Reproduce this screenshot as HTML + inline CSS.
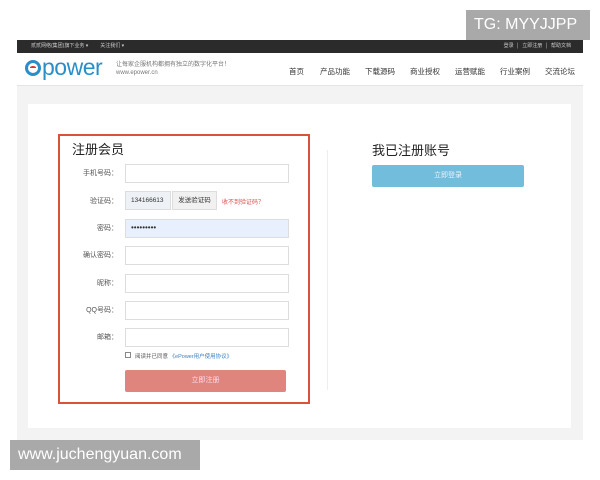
<!DOCTYPE html>
<html><head><meta charset="utf-8"><style>
*{margin:0;padding:0;box-sizing:border-box}
body{width:600px;height:480px;background:#fff;position:relative;overflow:hidden;font-family:"Liberation Sans","Noto Sans CJK SC",sans-serif;color:#333}
.a{position:absolute}
.top{left:17px;top:40px;width:566px;height:13px;background:#2b2b2b;color:#ccc;font-size:5px;line-height:13px}
.hdr{left:17px;top:53px;width:566px;height:33px;background:#fff;border-bottom:1px solid #e4e4e4}
.nav{font-size:7.5px;color:#333;top:66px}
.gray{left:17px;top:86px;width:566px;height:354px;background:#f3f3f3}
.card{left:28px;top:104px;width:543px;height:324px;background:#fff}
.box{left:58px;top:134px;width:252px;height:270px;border:2px solid #d9533a}
.lbl{font-size:7px;color:#555;text-align:right;width:62px;left:56px}
.inp{left:125px;width:164px;height:19px;border:1px solid #ddd;background:#fff}
.wm{background:#a9a9a9;color:#fff;font-size:16px;line-height:30px;padding-left:8px}
</style></head><body>
<div class="a top"><span style="margin-left:14px">贰贰网络(集团)旗下业务 ▾</span><span style="margin-left:12px">关注我们 ▾</span>
<span style="position:absolute;right:12px">登录 &nbsp;│&nbsp; 立即注册 &nbsp;│&nbsp; 帮助文档</span></div>
<div class="a hdr"></div>
<div class="a" style="left:25px;top:60px;width:16px;height:16px;border-radius:50%;border:3px solid #2a8ec9"></div>
<div class="a" style="left:30px;top:66px;width:6px;height:3px;border-top:2px solid #d33;border-radius:50% 50% 0 0"></div>
<div class="a" style="left:42px;top:54px;font-size:23px;color:#2a8ec9;letter-spacing:-0.5px">power</div>
<div class="a" style="left:116px;top:61px;font-size:6px;color:#777;line-height:8px">让每家企服机构都拥有独立的数字化平台！<br>www.epower.cn</div>
<div class="a nav" style="left:289px">首页</div>
<div class="a nav" style="left:320px">产品功能</div>
<div class="a nav" style="left:365px">下载源码</div>
<div class="a nav" style="left:410px">商业授权</div>
<div class="a nav" style="left:455px">运营赋能</div>
<div class="a nav" style="left:500px">行业案例</div>
<div class="a nav" style="left:545px">交流论坛</div>
<div class="a gray"></div>
<div class="a card"></div>
<div class="a box"></div>
<div class="a" style="left:72px;top:139px;font-size:13px;color:#222">注册会员</div>
<div class="a lbl" style="top:168px">手机号码：</div><div class="a inp" style="top:164px"></div>
<div class="a lbl" style="top:196px">验证码：</div>
<div class="a inp" style="top:191px;width:46px;background:#eef2f7;font-size:6.5px;line-height:18px;padding-left:5px">134166613</div>
<div class="a inp" style="top:191px;left:172px;width:45px;background:#f1f1f1;font-size:6.5px;line-height:18px;text-align:center">发送验证码</div>
<div class="a" style="left:222px;top:197px;font-size:6px;color:#d9534f">收不到验证码？</div>
<div class="a lbl" style="top:223px">密码：</div>
<div class="a inp" style="top:219px;background:#e8f0fd;font-size:8px;line-height:16px;padding-left:5px">•••••••••</div>
<div class="a lbl" style="top:250px">确认密码：</div><div class="a inp" style="top:246px"></div>
<div class="a lbl" style="top:278px">昵称：</div><div class="a inp" style="top:274px"></div>
<div class="a lbl" style="top:305px">QQ号码：</div><div class="a inp" style="top:301px"></div>
<div class="a lbl" style="top:332px">邮箱：</div><div class="a inp" style="top:328px"></div>
<div class="a" style="left:125px;top:352px;width:6px;height:6px;border:1px solid #888"></div>
<div class="a" style="left:135px;top:352px;font-size:5.5px;color:#555">阅读并已同意 <span style="color:#3a7fc0">《ePower用户使用协议》</span></div>
<div class="a" style="left:125px;top:370px;width:161px;height:22px;background:#e0847e;border-radius:2px;color:#fde;font-size:7px;text-align:center;line-height:22px">立即注册</div>
<div class="a" style="left:327px;top:150px;width:1px;height:240px;background:#eee"></div>
<div class="a" style="left:372px;top:140px;font-size:13px;color:#222">我已注册账号</div>
<div class="a" style="left:372px;top:165px;width:152px;height:22px;background:#72bcdc;border-radius:2px;color:#e8f6fc;font-size:7px;text-align:center;line-height:22px">立即登录</div>
<div class="a wm" style="left:466px;top:10px;width:124px;height:30px">TG: MYYJJPP</div>
<div class="a wm" style="left:10px;top:440px;width:190px;height:30px">www.juchengyuan.com</div>
</body></html>
